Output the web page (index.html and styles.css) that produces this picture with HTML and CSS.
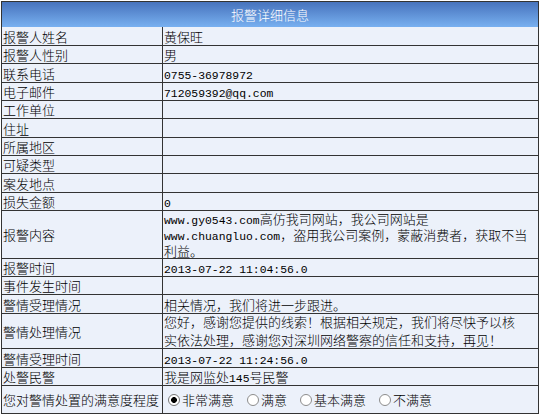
FILE: index.html
```html
<!DOCTYPE html>
<html lang="zh">
<head>
<meta charset="utf-8">
<title>报警详细信息</title>
<link rel="stylesheet" href="styles.css">
</head>
<body>
<div class="panel">
  <div class="title">报警详细信息</div>
  <div class="grid">
    <div class="label">报警人姓名</div><div class="value"><p>黄保旺</p></div>
    <div class="label">报警人性别</div><div class="value"><p>男</p></div>
    <div class="label">联系电话</div><div class="value"><p><span class="num">0755-36978972</span></p></div>
    <div class="label">电子邮件</div><div class="value"><p><span class="num">712059392@qq.com</span></p></div>
    <div class="label">工作单位</div><div class="value"></div>
    <div class="label">住址</div><div class="value"></div>
    <div class="label">所属地区</div><div class="value"></div>
    <div class="label">可疑类型</div><div class="value"></div>
    <div class="label">案发地点</div><div class="value"></div>
    <div class="label">损失金额</div><div class="value"><p><span class="num">0</span></p></div>
    <div class="label">报警内容</div><div class="value"><p class="multi"><span class="num">www.gy0543.com</span>高仿我司网站，我公司网站是<br><span class="num">www.chuangluo.com</span>，盗用我公司案例，蒙蔽消费者，获取不当<br>利益。</p></div>
    <div class="label">报警时间</div><div class="value"><p><span class="num">2013-07-22 11:04:56.0</span></p></div>
    <div class="label">事件发生时间</div><div class="value"></div>
    <div class="label">警情受理情况</div><div class="value"><p>相关情况，我们将进一步跟进。</p></div>
    <div class="label">警情处理情况</div><div class="value"><p class="multi loose">您好，感谢您提供的线索！根据相关规定，我们将尽快予以核<br>实依法处理，感谢您对深圳网络警察的信任和支持，再见！</p></div>
    <div class="label">警情受理时间</div><div class="value"><p><span class="num">2013-07-22 11:24:56.0</span></p></div>
    <div class="label">处警民警</div><div class="value"><p>我是网监处<span class="num">145</span>号民警</p></div>
    <div class="label last">您对警情处置的满意度程度</div>
    <div class="value last">
      <label class="opt"><input type="radio" name="sat" checked>非常满意</label>
      <label class="opt"><input type="radio" name="sat">满意</label>
      <label class="opt"><input type="radio" name="sat">基本满意</label>
      <label class="opt"><input type="radio" name="sat">不满意</label>
    </div>
  </div>
</div>
</body>
</html>
```

FILE: styles.css
```css
html, body {
  margin: 0;
  padding: 0;
  background: #ffffff;
}

body {
  font-family: "Noto Sans CJK SC", "Noto Sans", sans-serif;
  font-size: 13px;
  font-weight: 300;
  line-height: 17px;
  color: #000;
}

.panel {
  box-sizing: border-box;
  width: 538px;
  margin: 1px 0 0 1px;
  border: 1px solid #333;
  background: #ecf1fa;
}

.title {
  height: 25px;
  display: flex;
  align-items: center;
  justify-content: center;
  color: #fff;
  font-size: 13px;
  background: linear-gradient(#4773bd, #78b0f0);
}

.grid {
  display: grid;
  grid-template-columns: 161px 1fr;
  grid-template-rows: 19px 18px 19px 18px 18px 19px 18px 18px 19px 18px 48px 18px 18px 19px 35px 19px 18px 27px;
}

.label,
.value {
  box-sizing: border-box;
  display: flex;
  align-items: center;
  padding-left: 1px;
  border-bottom: 1px solid #333;
  white-space: nowrap;
  min-width: 0;
}

.label {
  border-right: 1px solid #333;
}

.label.last,
.value.last {
  border-bottom: none;
}

.value p {
  margin: 0;
}

.value p.multi {
  line-height: 16px;
}

.value p.loose {
  line-height: 18px;
}

.num {
  font-family: "Liberation Mono", monospace;
  font-size: 11.4px;
  font-weight: 400;
  line-height: 10px;
}

.opt {
  display: inline-flex;
  align-items: center;
  margin-right: 9px;
}

.opt input {
  appearance: none;
  -webkit-appearance: none;
  box-sizing: border-box;
  width: 12px;
  height: 12px;
  margin: 0 2px 0 4px;
  border: 1px solid #8c8c8c;
  border-radius: 50%;
  background: #fff;
}

.opt input:checked {
  background: radial-gradient(circle, #000 0 2.6px, #fff 3.2px);
  border-color: #777;
}
```
